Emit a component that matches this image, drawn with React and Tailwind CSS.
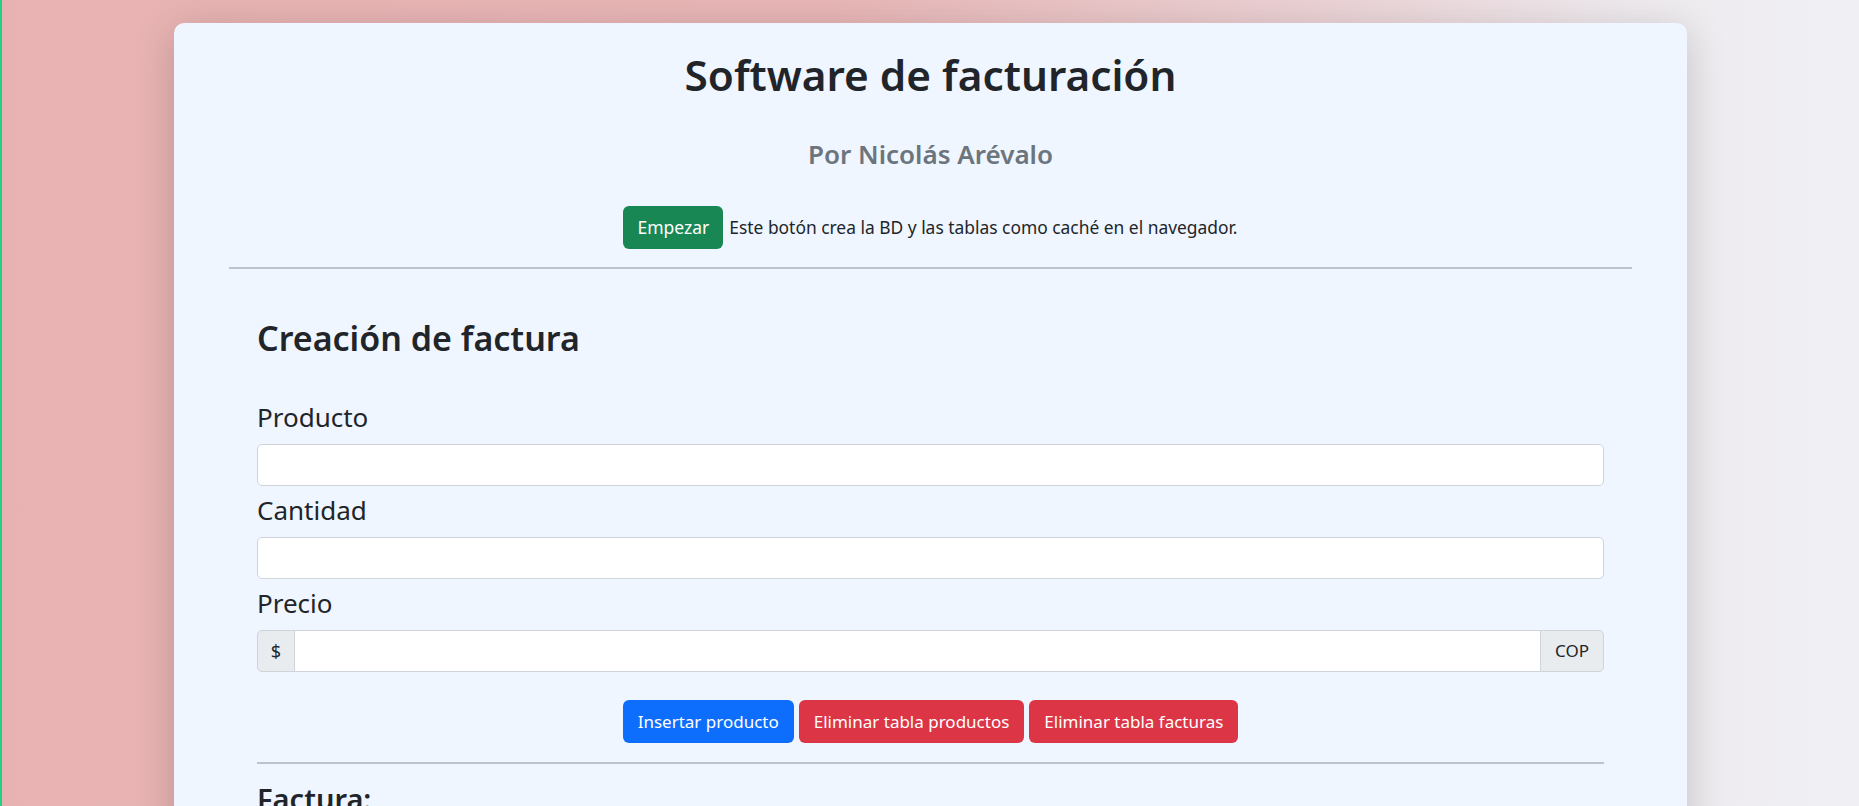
export default function App() {
  const label = 'block h-[34px] leading-[34px] text-[26px] text-[#212529]'
  const input = 'block w-full h-[42px] rounded-[5px] border border-[#ced4da] bg-white px-3 text-[18px] outline-none'
  const btn = 'h-[43px] rounded-[6px] px-[15px] text-[17px] text-white'

  return (
    <div className="h-screen w-full overflow-hidden border-l-2 border-[#1fd184] bg-[linear-gradient(to_right,#e8b2b2_0%,#e8b6b6_45%,#ebd3d6_72%,#eeeaee_88%,#f0f0f4_100%)] pt-[23px] font-['Noto_Sans',sans-serif]">
      <div className="mx-auto w-[1513px] rounded-[10px] bg-[#eff6ff] pt-[24px] pb-10 shadow-[0_8px_40px_rgba(0,0,0,0.18)]">
        <div className="px-[55px]">
          <div className="flex flex-col items-center">
            <h1 className="h-[56px] leading-[56px] text-[42.3px] font-semibold text-[#212529]">Software de facturación</h1>
            <h4 className="mt-[34px] h-[34px] leading-[34px] text-[26px] font-semibold text-[#6c757d]">Por Nicolás Arévalo</h4>
            <div className="mt-[35px] flex items-center gap-[6px]">
              <button className="h-[43px] rounded-[6px] bg-[#198754] px-[14px] text-[17.5px] text-white">Empezar</button>
              <span className="text-[17.4px] text-[#212529]">Este botón crea la BD y las tablas como caché en el navegador.</span>
            </div>
          </div>
          <div className="mt-[18px] h-[2px] bg-[#bcc3cb]"></div>
        </div>

        <div className="px-[83px]">
          <h2 className="mt-[46px] h-[46px] leading-[46px] text-[34px] font-semibold text-[#212529]">Creación de factura</h2>

          <div className="mt-[39px]">
            <label className={label}>Producto</label>
            <input className={`mt-[10px] ${input}`} type="text" />
          </div>
          <div className="mt-[7px]">
            <label className={label}>Cantidad</label>
            <input className={`mt-[10px] ${input}`} type="text" />
          </div>
          <div className="mt-[7px]">
            <label className={label}>Precio</label>
            <div className="mt-[10px] flex h-[42px] w-full">
              <span className="flex w-[38px] items-center justify-center rounded-l-[5px] border border-[#ced4da] bg-[#e9ecef] text-[18px] text-[#212529]">$</span>
              <input className="h-full flex-1 border-y border-[#ced4da] bg-white px-3 text-[18px] outline-none" type="text" />
              <span className="flex w-[64px] items-center justify-center rounded-r-[5px] border border-[#ced4da] bg-[#e9ecef] text-[17px] text-[#212529]">COP</span>
            </div>
          </div>

          <div className="mt-[28px] flex justify-center gap-[5px]">
            <button className={`${btn} bg-[#0d6efd]`}>Insertar producto</button>
            <button className={`${btn} bg-[#dc3545]`}>Eliminar tabla productos</button>
            <button className={`${btn} bg-[#dc3545]`}>Eliminar tabla facturas</button>
          </div>

          <div className="mt-[19px] h-[2px] bg-[#bcc3cb]"></div>

          <h4 className="mt-[18px] h-[34px] leading-[34px] text-[29px] font-semibold text-[#212529]">Factura:</h4>
        </div>
      </div>
    </div>
  )
}
